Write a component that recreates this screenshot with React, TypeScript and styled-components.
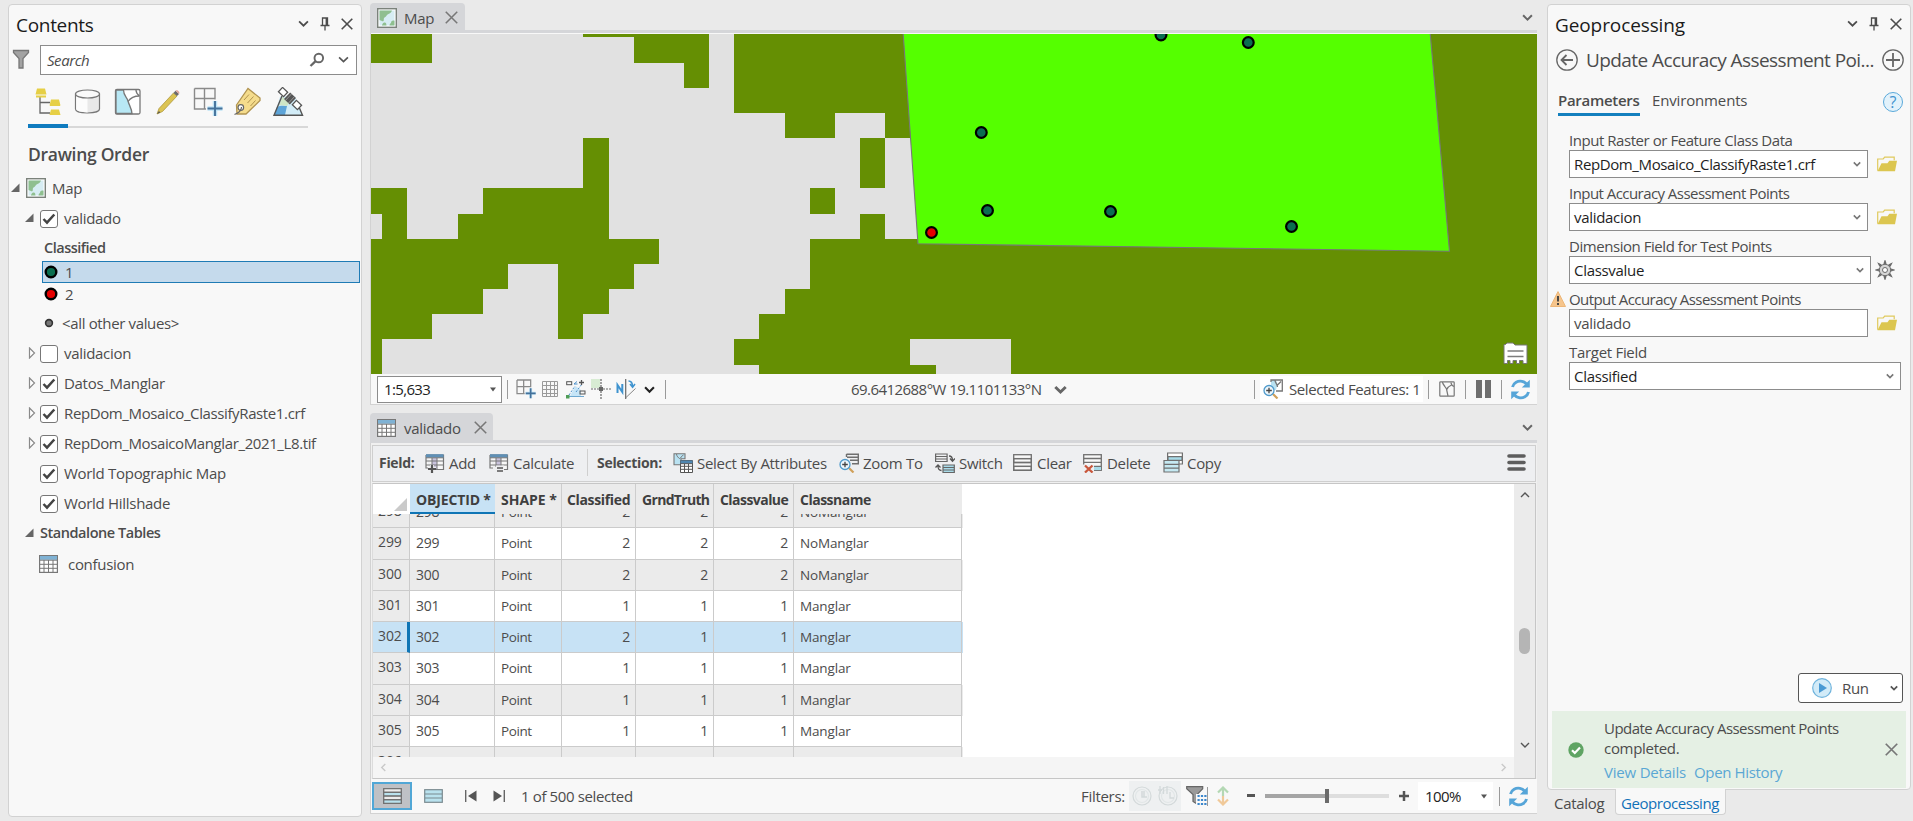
import React from 'react';
import styled, { createGlobalStyle, css } from 'styled-components';

const GlobalStyle = createGlobalStyle`
  * { box-sizing: border-box; }
  body {
    margin: 0;
    background: #eaeaea;
    color: #4c4c4c;
    font-family: "Open Sans", "Noto Sans", sans-serif;
    font-size: 15px;
    overflow: hidden;
  }
  svg { display: block; flex: none; }
`;

/* ---------- shared parts ---------- */

interface TextProps {
  $w?: number;
  $ls?: number;
  $size?: number;
  $weight?: number;
  $color?: string;
  $ml?: number;
}
const Text = styled.span<TextProps>`
  display: block;
  flex: none;
  white-space: nowrap;
  width: ${(p) => (p.$w ? `${p.$w}px` : 'auto')};
  letter-spacing: ${(p) => p.$ls ?? -0.3}px;
  font-size: ${(p) => p.$size ?? 15}px;
  font-weight: ${(p) => p.$weight ?? 400};
  color: ${(p) => p.$color ?? 'inherit'};
  margin-left: ${(p) => p.$ml ?? 0}px;
  line-height: 20px;
`;

const Slot = styled.span<{ $w: number; $ml?: number }>`
  display: flex;
  flex: none;
  align-items: center;
  justify-content: center;
  width: ${(p) => p.$w}px;
  margin-left: ${(p) => p.$ml ?? 0}px;
`;

const Separator = styled.span<{ $h?: number; $ml?: number; $color?: string }>`
  flex: none;
  width: 1px;
  height: ${(p) => p.$h ?? 19}px;
  margin-left: ${(p) => p.$ml ?? 0}px;
  background: ${(p) => p.$color ?? '#9a9a9a'};
`;

const Spacer = styled.span`
  flex: 1;
`;

/* ---------- icons ---------- */

const Chevron = ({ w = 10, color = '#555', sw = 1.8, dir = 0 }: { w?: number; color?: string; sw?: number; dir?: number }) => (
  <svg width={w} height={w} viewBox="0 0 10 10" fill="none" stroke={color} strokeWidth={sw}>
    <path d="M1 3l4 4 4-4" transform={`rotate(${dir} 5 5)`} />
  </svg>
);
const Caret = () => (
  <svg width="8" height="5" viewBox="0 0 8 5"><path d="M1 .5h6L4 4.5z" fill="#555" /></svg>
);
const Close = ({ s = 12, color = '#4c4c4c', sw = 1.6 }: { s?: number; color?: string; sw?: number }) => (
  <svg width={s} height={s} viewBox="0 0 12 12" stroke={color} strokeWidth={sw}><path d="M.7.7l10.6 10.6M11.300.7L.7 11.300" /></svg>
);
const Pin = () => (
  <svg width="10" height="14" viewBox="0 0 10 14" fill="none" stroke="#4c4c4c">
    <path d="M2.500 8V1h5v7" strokeWidth="1.300" /><path d="M6.500 1v7" strokeWidth="1.800" /><path d="M.5 8.500h9M5 8.500V13.500" strokeWidth="1.300" />
  </svg>
);
const Funnel = () => (
  <svg width="18" height="21" viewBox="0 0 18 21"><path d="M1.500 1.500h15v2l-5.500 6v9.500h-4V9.500l-5.500-6z" fill="#a3a3a3" stroke="#777" strokeWidth="1.300" /></svg>
);
const Magnifier = () => (
  <svg width="16" height="16" viewBox="0 0 16 16" fill="none" stroke="#666"><circle cx="9.800" cy="6" r="4.300" strokeWidth="1.900" /><path d="M6.600 9.200L1.500 14" strokeWidth="2.300" /></svg>
);
const MapIcon = ({ w = 20, h = 20 }) => (
  <svg width={w} height={h} viewBox="0 0 20 20" preserveAspectRatio="none">
    <rect x=".7" y=".7" width="18.600" height="18.600" fill="#fff" stroke="#7b827b" strokeWidth="1.400" />
    <rect x="2.500" y="2.500" width="15" height="15" fill="#d7edf3" />
    <path d="M2.500 2.500h12.500c-.6 2-2 2.800-3.600 3.500-2 1-1.900 2.500-3.900 3.500-1.200 1-.3 2.500-1 3.500-1 .8-1.800-.2-4-1zM5 17.500c.2-2 1.500-3.500 3-3s1.300 2 1.500 3zM12.500 17.500c0-2 1.800-2 1.800-4 .8-1 2-1 3.200-.8v4.800z" fill="#8fbf8f" />
  </svg>
);
const Table = () => (
  <svg width="19" height="18" viewBox="0 0 19 18">
    <rect x=".6" y=".6" width="17.800" height="16.800" fill="#fff" stroke="#777" strokeWidth="1.200" />
    <rect x="1" y="1" width="17" height="3.800" fill="#7fb2d4" />
    <path d="M1 5.200h17M1 9.300h17M1 13.300h17M5 5v12M9.500 5v12M14 5v12" stroke="#777" fill="none" />
  </svg>
);
const LayerTree = () => (
  <svg width="30" height="30" viewBox="0 0 30 30">
    <path d="M7 10v16h10M7 15.500h10" fill="none" stroke="#666" strokeWidth="1.300" />
    <g fill="#e6cf45"><path d="M4 1.500h8l1.500 6H2.500zM3 8.500h10v2H3zM18 12.500h8l1.500 6H16.500zM18 22.500h8l1.500 5.500H16.500zM17 18h10v1H17z" /></g>
  </svg>
);
const Cylinder = () => (
  <svg width="28" height="28" viewBox="0 0 28 28" stroke="#777" strokeWidth="1.200">
    <path d="M1.500 6v15c0 2.500 5.500 4 12 4s12-1.500 12-4V6z" fill="#e9e9e9" /><path d="M2.200 7v14c0 2 5 3.300 11.300 3.400V10z" fill="#fcfcfc" stroke="none" />
    <ellipse cx="13.500" cy="6" rx="12" ry="4" fill="#fafafa" />
  </svg>
);
const Selection = () => (
  <svg width="28" height="28" viewBox="0 0 28 28" fill="none" stroke="#777" strokeWidth="1.300">
    <rect x="1.500" y="1.500" width="24.500" height="24.500" rx="1.500" fill="#fff" />
    <path d="M2 2h7.500c0 6 3.500 7 4.500 11s3.500 7 4 12.500H2z" fill="#b8e8f5" />
    <path d="M14 13.500c2-3 5-5.500 11.500-5.500M22 2c0 3 1 4 3.500 6" />
  </svg>
);
const Pencil = () => (
  <svg width="28" height="28" viewBox="0 0 28 28">
    <path d="M5 20.500L19.500 5l3.500 3L8.500 23.500 3 26z" fill="#dcc453" stroke="#a89034" strokeWidth=".7" />
    <path d="M19.500 5l2-2.300 3.500 3.200L23 8z" fill="#6b6b6b" /><path d="M21.500 2.700c1.500-1.400 5 1.500 3.500 3.200z" fill="#e0a39a" /><path d="M3 26l2-3 1.200 1.600z" fill="#555" />
  </svg>
);
const GridPlus = ({ s = 30 }) => (
  <svg width={s} height={s} viewBox="0 0 30 30" fill="none">
    <path d="M1.500 1.500h20.500v11M1.500 1.500v20.500h11.500M11.500 1.500v20.500M1.500 11.500h20.500" stroke="#8a8a8a" strokeWidth={s < 25 ? 1.9 : 1.4} />
    <path d="M22 14v15M14.500 21.500h15" stroke="#bfe3f5" strokeWidth="4.500" /><path d="M22 14v15M14.500 21.500h15" stroke="#44719a" strokeWidth={s < 25 ? 2.4 : 1.9} />
  </svg>
);
const Tag = () => (
  <svg width="30" height="30" viewBox="0 0 30 30" fill="none">
    <path d="M3.500 18L15 1.500l12 9.500v2.500L13 27H4z" fill="#f5dc8c" stroke="#b19450" strokeWidth="1.300" />
    <path d="M11 13l5-5.500M14.500 16l6-6.500M17.500 19l5-5.500" stroke="#b19450" /><circle cx="7.800" cy="20.500" r="2.800" fill="#fff" stroke="#666" strokeWidth="1.200" />
    <path d="M8.500 20c0 4-3 6-7 7.500" stroke="#666" strokeWidth="1.200" />
  </svg>
);
const Satellite = () => (
  <svg width="32" height="30" viewBox="0 0 32 30">
    <path d="M8 9.500h15L30.500 28h-28z" fill="#d2ecf7" /><path d="M5 20c4-2 8-1 10-1l-2 9H2.500z" fill="#5da4d8" /><path d="M10.500 9.500L17 16l-2 3c-3 0-5-1-8-.5z" fill="#cfe6c6" />
    <path d="M10 9L2 28.300h28.500L27 20" fill="none" stroke="#555" strokeWidth="1.400" />
    <g transform="translate(18 11.500) rotate(43)"><rect x="-4" y="-4.500" width="8" height="9" fill="#555" /><path d="M-2 -4.500v9M2-4.500v9" stroke="#bbb" strokeWidth=".6" /><rect x="-13" y="-3" width="7" height="6" fill="#fff" stroke="#555" strokeWidth="1.300" /><rect x="6" y="-3" width="7" height="6" fill="#fff" stroke="#555" strokeWidth="1.300" /></g>
  </svg>
);
const GridIcon = () => (
  <svg width="18" height="18" viewBox="0 0 18 18" fill="none" stroke="#9a9a9a"><path d="M1.500 1.500h15v15h-15zM5.500 1.500v15M9.500 1.500v15M13.500 1.500v15M1.500 5.500h15M1.500 9.500h15M1.500 13.500h15" /></svg>
);
const Snapping = () => (
  <svg width="20" height="20" viewBox="0 0 20 20" fill="none">
    <path d="M9.500 7L15 11v6H4z" fill="#c6e5f7" /><path d="M3 16L9 7M10 13l6-8" stroke="#4b8fc9" strokeDasharray="2 1.500" /><path d="M8 5l3-2.500M8 5h3.500" stroke="#4b8fc9" />
    <rect x=".7" y="2.700" width="5" height="3" stroke="#555" /><rect x="14" y="12" width="5" height="3" stroke="#555" />
    <path d="M3 17.500h15" stroke="#6ea8d0" /><rect y="16" width="3.500" height="3.500" fill="#4f9d57" /><path d="M15.500 1v5M13 3.500h5" stroke="#555" strokeWidth="1.300" />
  </svg>
);
const Crosshair = () => (
  <svg width="20" height="20" viewBox="0 0 20 20"><rect width="9" height="9" fill="#d8ecd3" /><path d="M10 0v20M0 10h20" stroke="#666" strokeWidth="1.200" strokeDasharray="2 1" /><rect x="8" y="8" width="4" height="4" fill="#666" /></svg>
);
const North = () => (
  <svg width="21" height="20" viewBox="0 0 21 20" fill="none">
    <path d="M1.500 14V6l4.800 7V5" stroke="#3f93cf" strokeWidth="2" /><path d="M9.700 0v20" stroke="#666" strokeWidth="1.200" /><path d="M10 18.500L19.500 9.500" stroke="#888" />
    <path d="M12.500 2c3 0 4 2 4 5.500M14 5l2.600 3.300L19 5" stroke="#3f93cf" strokeWidth="1.500" />
  </svg>
);
const ZoomSel = ({ rows = false }) => (
  <svg width="20" height="20" viewBox="0 0 20 20" fill="none">
    {rows
      ? <path d="M7.500 1.200h11.800v9.500H13M7.500 1v3M8 4.200h11M11 7.300h8" stroke="#6f6f6f" strokeWidth="1.400" fill="none" />
      : <><path d="M8 1h5l1.500 4-1.500 6H8z" fill="#b9e2f2" /><path d="M8 3V1h11.300v11H13M12 1c0 3 2 3 2.500 7M14.500 6l3.500-3.500" stroke="#777" strokeWidth="1.300" /></>}
    <path d="M10 15l4.500 4.500" stroke="#d0a05a" strokeWidth="2.200" />
    <circle cx="6" cy="11.500" r="5" fill="#eef7fc" stroke="#4f9acb" strokeWidth="1.300" /><path d="M6 8.700v5.600M3.200 11.500h5.600" stroke="#444" strokeWidth="1.300" />
  </svg>
);
const SelMap = () => (
  <svg width="16" height="16" viewBox="0 0 16 16" fill="none" stroke="#777" strokeWidth="1.200"><rect x=".8" y=".8" width="14.400" height="14.400" rx=".8" /><path d="M3.500 1c0 3.500 3 4 4 7l1.500 7M7.800 8.500c1-2.500 2.500-3.500 4.700-4.500M12 1.500c0 2 1 3 3 4M4 2.500l2 3" /></svg>
);
const Pause = () => <svg width="15" height="18" viewBox="0 0 15 18" fill="#6e6e6e"><path d="M0 0h6v18H0zM9 0h6v18H9z" /></svg>;
const Refresh = () => (
  <svg width="21" height="21" viewBox="0 0 21 21" fill="none" stroke="#56a5d8" strokeWidth="2.900">
    <path d="M2.500 8C3.500 3.500 8 1.500 12 2.300c2 .4 3.500 1.500 4.500 2.700M18.500 13c-1 4.500-5.500 6.500-9.500 5.700-2-.4-3.500-1.500-4.500-2.700" />
    <path d="M19.800.8v7.700h-8zM1.200 20.200v-7.700h8z" fill="#56a5d8" stroke="none" />
  </svg>
);
const FieldIcon = ({ calc = false }) => (
  <svg width="20" height="20" viewBox="0 0 20 20" fill="none">
    <path d="M1 2h17.500v14.500H9M1 2v13h3" stroke="#777" strokeWidth="1.200" fill="#f8f8f8" /><rect x="1" y="1.200" width="17.500" height="3.500" fill="#5f8fb5" />
    <rect x="7" y="5" width="5" height="11" fill="#c9c3dd" /><path d="M1 8h17M1 12h17M7 5v9M12 5v11M1 4.800h17" stroke="#777" />
    {calc
      ? <g><rect x="7" y="12.500" width="8" height="7" fill="#eeeff1" /><path d="M8 15h6M8 18h6" stroke="#555" strokeWidth="1.700" /></g>
      : <g><path d="M7 12v8M3 16h8" stroke="#eeeff1" strokeWidth="4" /><path d="M7 12v8M3 16h8" stroke="#555" strokeWidth="2.200" /></g>}
  </svg>
);
const SelAttr = () => (
  <svg width="20" height="20" viewBox="0 0 20 20" fill="none">
    <path d="M1 .8h11v5H8v6H1z" fill="#b9e2f2" stroke="#777" strokeWidth="1.100" /><path d="M3.500 1c0 2 2 4 3 4.500S9 2 10.500 2" stroke="#777" />
    <path d="M7.500 7.500h12v12h-12z" fill="#fff" stroke="#555" /><path d="M7.500 7.500h12v3.200h-12z" fill="#4f86b0" /><path d="M7.500 13.300h12M7.500 16.300h12M11.500 11v8.500M15.500 11v8.500M7.500 10.700h12" stroke="#555" />
  </svg>
);
const SwitchIcon = () => (
  <svg width="20" height="20" viewBox="0 0 20 20" fill="none">
    <path d="M.6 1h11.500v7.500H.6zM.6 3.500h11.500M.6 6h11.500" stroke="#666" strokeWidth="1.200" /><path d="M8 12h11.300v7.500H8z" fill="#a8dbe9" /><path d="M8 12h11.300v7.500H8zM8 14.500h11.300M8 17h11.300" stroke="#666" strokeWidth="1.200" />
    <path d="M14 3c2.500 0 3.500 1.500 3.500 4.500M15 5.500l2.500 2.700L20 5.500M6.500 17.500c-2.500 0-3.500-1.500-3.500-4.500M.5 14.500L3 12l2.500 2.500" stroke="#555" strokeWidth="1.300" />
  </svg>
);
const Rows = ({ fill = 'none', a = 'none', b = 'none', w = 19, h = 17 }) => (
  <svg width={w} height={h} viewBox="0 0 19 17" preserveAspectRatio="none" stroke="#707070" strokeWidth="1.300">
    <rect x=".7" y=".7" width="17.600" height="15.600" fill={fill} />
    <rect x=".7" y="4.600" width="17.600" height="3.900" fill={a} /><rect x=".7" y="12.400" width="17.600" height="3.900" fill={b} />
    <path d="M1 4.600h17M1 8.500h17M1 12.400h17" />
  </svg>
);
const SelectedRows = () => (
  <svg width="19" height="14" viewBox="0 0 19 14" stroke="#7a8a90" strokeWidth="1.200">
    <rect x=".7" y=".7" width="17.600" height="12.600" fill="#b9e2ee" /><path d="M1 5h17M1 9h17" />
  </svg>
);
const DeleteRows = () => (
  <svg width="19" height="20" viewBox="0 0 19 20" fill="none">
    <rect x=".7" y="1.700" width="17.600" height="15.600" fill="#f8f8f8" stroke="#707070" strokeWidth="1.300" /><path d="M1 13h17v4H1z" fill="#a8dbe9" />
    <path d="M1 5.500h17M1 9.300h17M10 13.300h8" stroke="#707070" strokeWidth="1.300" /><rect x="0" y="11.500" width="11" height="8.500" fill="#eeeff1" /><path d="M2 12.500l7.500 7M9.500 12.500l-7.500 7" stroke="#c9573c" strokeWidth="2.300" />
  </svg>
);
const CopyRows = () => (
  <svg width="20" height="21" viewBox="0 0 20 21" stroke="#707070" strokeWidth="1.200">
    <path d="M4.600 1h14.800v11H4.600z" fill="#fff" /><path d="M5 4.700h14v3.700H5z" fill="#a8dbe9" /><path d="M1 8.500h15v11.500H1z" fill="#c5e9f2" /><path d="M1 12.300h15M1 16.100h15" />
  </svg>
);
const FolderIcon = () => (
  <svg width="20" height="16" viewBox="0 0 20 16"><path d="M.7 14.800V3h5.500l1.500-1.800h9.500v3" fill="none" stroke="#dfc95c" strokeWidth="1.200" /><path d="M.5 15.300l4-8h6l1.800-2.500H20l-2 10.500z" fill="#dcc650" /></svg>
);
const Gear = () => (
  <svg width="20" height="20" viewBox="-10 -10 20 20" fill="none" stroke="#6b6b6b">
    {[0, 45, 90, 135, 180, 225, 270, 315].map((a) => <path key={a} d="M-1 -6L0 -9L1 -6" transform={`rotate(${a})`} strokeWidth="1.300" fill="#6b6b6b" />)}
    <circle r="5.700" fill="#d6d6d6" strokeWidth="1" /><circle r="2.500" fill="#fff" strokeWidth="1" />
  </svg>
);
const Warning = () => (
  <svg width="16" height="16" viewBox="0 0 16 16"><path d="M8 .6L15.500 15.500H.5z" fill="#f6c58c" stroke="#edb678" /><path d="M8 5v5.500M8 12v2" stroke="#444" strokeWidth="1.900" /></svg>
);
const BackCircle = () => (
  <svg width="22" height="22" viewBox="0 0 22 22" fill="none" stroke="#666"><circle cx="11" cy="11" r="10.200" strokeWidth="1.300" /><path d="M17 11H5.500M10.500 6L5.500 11l5 5" strokeWidth="1.800" /></svg>
);
const PlusCircle = () => (
  <svg width="22" height="22" viewBox="0 0 22 22" fill="none" stroke="#666"><circle cx="11" cy="11" r="10.200" strokeWidth="1.300" /><path d="M11 4v14M4 11h14" strokeWidth="1.800" /></svg>
);
const PlayCircle = () => (
  <svg width="20" height="20" viewBox="0 0 20 20"><circle cx="10" cy="10" r="9.300" fill="#d2ebf8" stroke="#6fb3dc" strokeWidth="1.200" /><path d="M7 5l8 5-8 5z" fill="#4a9ad4" /></svg>
);
const CheckCircle = () => (
  <svg width="16" height="16" viewBox="0 0 16 16"><circle cx="8" cy="8" r="7.700" fill="#5fa463" /><path d="M4 8.200l2.800 2.800L12 5.500" stroke="#fff" strokeWidth="2.200" fill="none" /></svg>
);
const Clock = ({ bars = false }) => (
  <svg width="20" height="20" viewBox="0 0 20 20" fill="none" stroke="#d3d9da" strokeWidth="1.200">
    <circle cx="10" cy="10" r="9" /><circle cx="10" cy="10" r="6.500" stroke="#e1e6e7" />{bars ? <path d="M2 0v8M5.500 1v7M9 0v8M0 4h4M12 6v6h4" strokeWidth="1.300" /> : <path d="M10 5v6h5M12 5v6" strokeWidth="1.500" />}
  </svg>
);
const FunnelSel = () => (
  <svg width="21" height="20" viewBox="0 0 21 20"><path d="M.7.7h16v2l-5.700 6V18l-4-2.500V8.500L.7 2.700z" fill="#9a9a9a" stroke="#666" strokeWidth="1.200" /><path d="M10 8h11v12H10z" fill="#f8f8f8" /><path d="M11.500 10h9M11.500 14h9M11.500 18h9" stroke="#3b86cb" strokeWidth="2.200" strokeDasharray="2.200 1.200" /></svg>
);
const UpDown = () => (
  <svg width="12" height="20" viewBox="0 0 12 20" fill="none" strokeWidth="2.200"><path d="M6 10V2M1 6.500l5-5 5 5" stroke="#b4d8b4" /><path d="M6 10v8M1 13.500l5 5 5-5" stroke="#f0c999" /></svg>
);

/* ---------- page frame ---------- */

const Page = styled.div`
  display: grid;
  grid-template-columns: 354px 1167px 364px;
  column-gap: 8px;
  width: 1913px;
  height: 821px;
  padding: 4px 0 0 8px;
  overflow: hidden;
`;

const Panel = styled.section<{ $h: number }>`
  display: flex;
  flex-direction: column;
  height: ${(p) => p.$h}px;
  background: #f8f8f8;
  border: 1px solid #d2d2d2;
  border-radius: 4px;
`;

const PanelTitle = styled.header`
  display: flex;
  align-items: center;
  height: 39px;
  padding: 0 8px 0 7px;
  color: #1b1b1b;
`;

const TitleIcons = styled.div`
  display: flex;
  align-items: center;
  gap: 11px;
  margin-bottom: 2px;
`;

const TitleButtons = () => (
  <TitleIcons>
    <Chevron w={11} color="#4c4c4c" sw={1.6} />
    <Pin />
    <Close />
  </TitleIcons>
);

/* ---------- contents panel ---------- */

const SearchRow = styled.div`
  display: flex;
  align-items: center;
  height: 31px;
  padding-left: 3px;
`;
const SearchBox = styled.div`
  display: flex;
  align-items: center;
  width: 317px;
  height: 30px;
  margin-left: 10px;
  padding: 0 7px 0 6px;
  gap: 13px;
  background: #fff;
  border: 1px solid #8c8c8c;
  font-style: italic;
`;
const ListTabs = styled.div`
  display: flex;
  width: 280px;
  height: 42px;
  margin: 11px 0 0 19px;
  border-bottom: 2px solid #d8d8d8;
`;
const ListTab = styled.div<{ $active?: boolean }>`
  display: flex;
  align-items: center;
  justify-content: center;
  width: 40px;
  height: 42px;
  padding-bottom: 10px;
  ${(p) => p.$active && css`border-bottom: 4px solid #0f7bbf; padding-bottom: 6px;`}
`;
const Heading = styled.h2`
  margin: 13px 0 6px 19px;
  font-size: 17.500px;
  font-weight: 600;
  line-height: 27px;
  letter-spacing: -0.3px;
  color: #4c4c4c;
`;
const TreeRow = styled.div<{ $indent: number; $h?: number; $pt?: number }>`
  display: flex;
  align-items: center;
  height: ${(p) => p.$h ?? 30}px;
  padding-left: ${(p) => p.$indent}px;
  padding-top: ${(p) => p.$pt ?? 0}px;
`;
const SelectedRow = styled(TreeRow)`
  margin: 0 1px 0 33px;
  background: #c5daec;
  border: 1px solid #1f7bb5;
`;
const CheckFrame = styled.span`
  display: flex;
  align-items: center;
  justify-content: center;
  width: 18px;
  height: 18px;
  margin-top: 2px;
  background: #fff;
  border: 1px solid #777;
  border-radius: 3px;
`;
const Checkbox = ({ on = true }) => (
  <CheckFrame>{on && <svg width="14" height="12" viewBox="0 0 14 12"><path d="M1.500 6l3.500 3.700L12.300 1.500" fill="none" stroke="#444" strokeWidth="2.500" /></svg>}</CheckFrame>
);
const Expander = ({ open = false }) => (
  <svg width="9" height="12" viewBox="0 0 9 12">
    {open ? <path d="M8.500 1.500v8.500H0z" fill="#666" /> : <path d="M2.500 1l5 5-5 5z" fill="#fff" stroke="#8a8a8a" strokeWidth="1.200" />}
  </svg>
);
const Symbol = ({ fill, r = 5.3, sw = 2.4 }: { fill: string; r?: number; sw?: number }) => (
  <svg width="14" height="14" viewBox="-7 -7 14 14"><circle r={r} fill={fill} stroke={r < 5 ? '#333' : '#000'} strokeWidth={sw} /></svg>
);

const layers: { name: string; on: boolean; exp: boolean; ls?: number }[] = [
  { name: 'validacion', on: false, exp: true },
  { name: 'Datos_Manglar', on: true, exp: true },
  { name: 'RepDom_Mosaico_ClassifyRaste1.crf', on: true, exp: true, ls: -0.38 },
  { name: 'RepDom_MosaicoManglar_2021_L8.tif', on: true, exp: true, ls: -0.39 },
  { name: 'World Topographic Map', on: true, exp: false },
  { name: 'World Hillshade', on: true, exp: false },
];

const Contents = () => (
  <Panel $h={813}>
    <PanelTitle>
      <Text $size={19}>Contents</Text>
      <Spacer />
      <TitleButtons />
    </PanelTitle>
    <SearchRow>
      <Funnel />
      <SearchBox>
        <Text $ls={-0.45}>Search</Text>
        <Spacer />
        <Magnifier />
        <Chevron w={11} sw={1.5} />
      </SearchBox>
    </SearchRow>
    <ListTabs>
      <ListTab $active><LayerTree /></ListTab>
      <ListTab><Cylinder /></ListTab>
      <ListTab><Selection /></ListTab>
      <ListTab><Pencil /></ListTab>
      <ListTab><GridPlus /></ListTab>
      <ListTab><Tag /></ListTab>
      <ListTab><Satellite /></ListTab>
    </ListTabs>
    <Heading>Drawing Order</Heading>
    <TreeRow $indent={2} $h={28}>
      <Expander open />
      <Slot $w={20} $ml={6}><MapIcon /></Slot>
      <Text $ml={6}>Map</Text>
    </TreeRow>
    <TreeRow $indent={16} $h={32}>
      <Expander open />
      <Slot $w={18} $ml={6}><Checkbox /></Slot>
      <Text $ml={6}>validado</Text>
    </TreeRow>
    <TreeRow $indent={35} $h={27}><Text $size={14.5} $weight={600} $ls={-0.5}>Classified</Text></TreeRow>
    <SelectedRow $indent={1} $h={22}><Symbol fill="#0a6e50" /><Text $ml={7}>1</Text></SelectedRow>
    <TreeRow $indent={35} $h={22}><Symbol fill="#e60000" /><Text $ml={7}>2</Text></TreeRow>
    <TreeRow $indent={33} $h={33} $pt={3}><Symbol fill="#777" r={3.4} sw={1.6} /><Text $ml={6} $ls={-0.35}>{'<all other values>'}</Text></TreeRow>
    {layers.map((l) => (
      <TreeRow $indent={18} key={l.name}>
        <Slot $w={9}>{l.exp && <Expander />}</Slot>
        <Slot $w={18} $ml={4}><Checkbox on={l.on} /></Slot>
        <Text $ml={6} $ls={l.ls}>{l.name}</Text>
      </TreeRow>
    ))}
    <TreeRow $indent={16}><Expander open /><Text $size={14.5} $weight={600} $ml={6} $ls={-0.45}>Standalone Tables</Text></TreeRow>
    <TreeRow $indent={30} $h={32}><Table /><Text $ml={10}>confusion</Text></TreeRow>
  </Panel>
);

/* ---------- centre column ---------- */

const Center = styled.main`
  display: flex;
  flex-direction: column;
`;
const TabStrip = styled.div<{ $h: number }>`
  display: flex;
  align-items: flex-end;
  height: ${(p) => p.$h}px;
  padding-right: 4px;
  border-bottom: 3px solid #d5d6d9;
`;
const DocTab = styled.div<{ $w: number }>`
  display: flex;
  align-items: center;
  width: ${(p) => p.$w}px;
  height: 27px;
  padding: 2px 0 0 7px;
  background: #d5d6d9;
  border-radius: 4px 4px 0 0;
`;
const StripMenu = styled.span`
  padding-bottom: 7px;
`;
const MapFrame = styled.div`
  height: 372px;
  border: solid #d2d2d2;
  border-width: 0 0 1px 1px;
  background: #f8f8f8;
`;
const MapCanvas = styled.div`
  position: relative;
  height: 341px;
  padding-top: 1px;
`;
const LegendButton = styled.div`
  position: absolute;
  right: 9px;
  bottom: 9px;
`;
const StatusBar = styled.div`
  display: flex;
  align-items: center;
  height: 30px;
  padding-left: 6px;
`;
const Combo = styled.div<{ $w: number; $h: number; $plain?: boolean; $ml?: number }>`
  display: flex;
  flex: none;
  align-items: center;
  justify-content: space-between;
  width: ${(p) => p.$w}px;
  height: ${(p) => p.$h}px;
  margin-left: ${(p) => p.$ml ?? 0}px;
  padding: 0 4px 0 6px;
  color: #222;
  background: #fff;
  border: 1px solid ${(p) => (p.$plain ? '#fff' : '#8c8c8c')};
`;
const SelectedCount = styled.div`
  display: flex;
  align-items: center;
  width: 163px;
  height: 26px;
  margin-left: 5px;
  padding-left: 3px;
  background: #fff;
`;

const dots = [[1161, 35], [1248.300, 42.500], [981.300, 132.500], [987.500, 210.500], [1110.500, 211.500], [1291.500, 226.500]];

const MapView = () => (
  <MapCanvas>
    <svg width="1166" height="340" viewBox="371 34 1166 340">
      <rect x="371" y="34" width="1166" height="340" fill="#e1e1e1" />
      <g fill="#658f03">
        <path d="M371 34H432V63H371zM583 34H709V88H684V63H634V37H583z" />
        <path d="M371 188H407V239H458V214H483V188H583V138H609V239H659V264H634V289H609V314H583V339H558V264H508V289H483V314H432V339H382V374H371V239H382V214H371z" />
        <path d="M734 34H1537V374H1011V339H910V365H936V374H759V365H734V339H759V314H785V289H810V239H930V138H885V113H835V138H785V113H734z" />
        <path d="M860 138H885V188H860zM810 188H835V214H810zM860 214H885V239H860z" />
      </g>
      <path d="M902.200 20L918 243.700L1449.500 251.300L1429 20z" fill="#55ff00" stroke="#777" strokeWidth="1.100" />
      {dots.map(([x, y]) => <circle key={x} cx={x} cy={y} r="5.400" fill="#0a6e50" stroke="#000" strokeWidth="2.200" />)}
      <circle cx="931.500" cy="232.500" r="5.400" fill="#e60000" stroke="#000" strokeWidth="2.200" />
    </svg>
    <LegendButton>
      <svg width="25" height="23" viewBox="0 0 25 23">
        <path d="M1 21.500V2.500h1.500L4 1h6l2 2h12v18.500h-4v-3h-3.500v3h-3v-3H10v3H7v-3H4.500v3z" fill="#fff" stroke="#777" strokeWidth="1" />
        <path d="M4.500 9h16M4.500 14.500h16" stroke="#7d7d7d" strokeWidth="1.500" />
      </svg>
    </LegendButton>
  </MapCanvas>
);

const MapPane = () => (
  <>
    <TabStrip $h={29}>
      <DocTab $w={95}>
        <MapIcon />
        <Text $w={41} $ml={7}>Map</Text>
        <Close s={13} color="#777" sw={1.4} />
      </DocTab>
      <Spacer />
      <StripMenu><Chevron w={11} color="#666" /></StripMenu>
    </TabStrip>
    <MapFrame>
      <MapView />
      <StatusBar>
        <Combo $w={125} $h={27}><Text $ls={-0.65}>1:5,633</Text><Caret /></Combo>
        <Separator $ml={5} />
        <Slot $w={20} $ml={8}><GridPlus s={20} /></Slot>
        <Slot $w={18} $ml={5}><GridIcon /></Slot>
        <Slot $w={20} $ml={7}><Snapping /></Slot>
        <Slot $w={20} $ml={5}><Crosshair /></Slot>
        <Slot $w={21} $ml={5}><North /></Slot>
        <Slot $w={11} $ml={7}><Chevron w={11} color="#222" sw={1.9} /></Slot>
        <Separator $ml={10} />
        <Text $w={191} $ml={185} $ls={-0.55}>69.6412688°W 19.1101133°N</Text>
        <Slot $w={13} $ml={12}><Chevron w={13} color="#666" sw={2.2} /></Slot>
        <Separator $ml={187} />
        <SelectedCount><ZoomSel /><Text $ml={6} $ls={-0.43}>Selected Features: 1</Text></SelectedCount>
        <Separator $ml={5} />
        <Slot $w={16} $ml={10}><SelMap /></Slot>
        <Separator $ml={10} />
        <Slot $w={15} $ml={10}><Pause /></Slot>
        <Separator $ml={10} />
        <Slot $w={21} $ml={8}><Refresh /></Slot>
      </StatusBar>
    </MapFrame>
  </>
);

/* ---------- attribute table ---------- */

const TableFrame = styled.div`
  display: flex;
  flex-direction: column;
  height: 371px;
  padding: 2px 1px 0;
  background: #f0f0f0;
  border: solid #d2d2d2;
  border-width: 0 0 1px 1px;
`;
const TableToolbar = styled.div`
  display: flex;
  align-items: center;
  flex: none;
  height: 37px;
  padding: 0 0 2px 6px;
  background: #eeeff1;
  border: 1px solid #cfcfcf;
`;
const GridBox = styled.div`
  display: flex;
  flex: none;
  height: 296px;
  margin-top: 1px;
  background: #fff;
  border: 1px solid #c6c6c6;
  border-left-color: #dcdcdc;
`;
const GridMain = styled.div`
  display: flex;
  flex-direction: column;
  width: 1141px;
`;
const gridColumns = 'grid-template-columns: 37px 85px 67px 74px 78px 80px 168px;';
const HeaderRow = styled.div`
  display: grid;
  flex: none;
  ${gridColumns}
  width: 589px;
  height: 30px;
  background: #ebebeb;
`;
const HeaderCell = styled.div<{ $sorted?: boolean; $pad: number }>`
  display: flex;
  align-items: center;
  height: 30px;
  padding: 2px 0 0 ${(p) => p.$pad}px;
  border-right: 1px solid #cdcdcd;
  color: #3f3f3f;
  &:last-child { border-right: 0; }
  ${(p) => p.$sorted && css`background: #c7e2f5; border-bottom: 2px solid #0f75b5; border-right: 0; padding-top: 4px;`}
`;
const CornerCell = styled.div`
  display: flex;
  align-items: flex-end;
  justify-content: flex-end;
  padding: 0 3px 3px 0;
  background: #fff;
`;
const Body = styled.div`
  height: 243px;
  overflow: hidden;
`;
const BodyRows = styled.div`
  margin-top: -17px;
`;
const DataRow = styled.div<{ $alt: boolean; $sel: boolean }>`
  display: grid;
  ${gridColumns}
  width: 590px;
  height: 31.25px;
  background: ${(p) => (p.$sel ? '#c7e2f5' : p.$alt ? '#ebebeb' : '#fff')};
`;
const Cell = styled.div<{ $right?: boolean; $head?: boolean; $mark?: boolean }>`
  display: flex;
  align-items: center;
  justify-content: ${(p) => (p.$right ? 'flex-end' : 'flex-start')};
  padding: 0 ${(p) => (p.$right ? 5 : 0)}px 0 6px;
  border-right: 1px solid #cbcbcb;
  border-bottom: 1.500px solid #cbcbcb;
  ${(p) => p.$head && css`padding: 0 0 2px 5px; background: #ebebeb;`}
  ${(p) => p.$mark && css`background: #c7e2f5; border-right: 3px solid #0f75b5;`}
`;
const HScroll = styled.div`
  display: flex;
  align-items: center;
  justify-content: space-between;
  height: 21px;
  padding: 0 6px;
  background: #f5f5f5;
`;
const VScroll = styled.div`
  display: flex;
  flex-direction: column;
  align-items: center;
  width: 21px;
  padding-top: 6px;
  background: #ebebeb;
`;
const Thumb = styled.span<{ $top: number; $bottom: number }>`
  width: 11px;
  height: 26px;
  margin: ${(p) => p.$top}px 0 ${(p) => p.$bottom}px;
  border-radius: 5.500px;
  background: #b5b5b5;
`;
const TableStatus = styled.div`
  display: flex;
  align-items: center;
  flex: none;
  height: 34px;
  background: #f8f8f8;
  margin: 0 -1px;
  padding-left: 1px;
`;
const ViewButton = styled.div<{ $active?: boolean }>`
  display: flex;
  align-items: center;
  justify-content: center;
  width: 40px;
  height: 28px;
  ${(p) => p.$active && css`background: #bfc1c5; border: 2px solid #51a7d6;`}
`;
const DisabledGroup = styled.div`
  display: flex;
  align-items: center;
  justify-content: center;
  gap: 6px;
  width: 52px;
  height: 30px;
  margin-left: 6px;
  background: #eef0f1;
`;
const SliderTrack = styled.div`
  display: flex;
  align-items: center;
  width: 124px;
  height: 4px;
  margin-left: 10px;
  background: linear-gradient(90deg, #a5a5a5 50%, #dedede 50%);
  justify-content: center;
`;
const SliderThumb = styled.span`
  flex: none;
  width: 4px;
  height: 14px;
  background: #6b6b6b;
`;

const records = [
  [298, 2, 2, 2, 'NoManglar'],
  [299, 2, 2, 2, 'NoManglar'],
  [300, 2, 2, 2, 'NoManglar'],
  [301, 1, 1, 1, 'Manglar'],
  [302, 2, 1, 1, 'Manglar'],
  [303, 1, 1, 1, 'Manglar'],
  [304, 1, 1, 1, 'Manglar'],
  [305, 1, 1, 1, 'Manglar'],
  [306, 1, 1, 1, 'Manglar'],
] as const;

const headers: { name: string; ls: number; pad: number }[] = [
  { name: 'OBJECTID *', ls: -0.15, pad: 6 },
  { name: 'SHAPE *', ls: 0, pad: 6 },
  { name: 'Classified', ls: -0.35, pad: 5 },
  { name: 'GrndTruth', ls: -0.68, pad: 6 },
  { name: 'Classvalue', ls: -0.55, pad: 6 },
  { name: 'Classname', ls: -0.5, pad: 6 },
];

const TablePane = () => (
  <>
    <TabStrip $h={38}>
      <DocTab $w={123}>
        <Table />
        <Text $w={70} $ml={8}>validado</Text>
        <Close s={13} color="#777" sw={1.4} />
      </DocTab>
      <Spacer />
      <StripMenu><Chevron w={11} color="#666" /></StripMenu>
    </TabStrip>
    <TableFrame>
      <TableToolbar>
        <Text $weight={700} $w={46} $size={14}>Field:</Text>
        <FieldIcon /><Text $ml={4} $w={40}>Add</Text>
        <FieldIcon calc /><Text $ml={4} $w={74}>Calculate</Text>
        <Separator $h={27} $color="#cfcfcf" />
        <Text $weight={700} $ml={9} $w={76} $size={14}>Selection:</Text>
        <SelAttr /><Text $ml={4} $w={142}>Select By Attributes</Text>
        <ZoomSel rows /><Text $ml={4} $w={72}>Zoom To</Text>
        <SwitchIcon /><Text $ml={4} $w={54}>Switch</Text>
        <Rows fill="#f8f8f8" /><Text $ml={5} $w={46}>Clear</Text>
        <DeleteRows /><Text $ml={5} $w={56}>Delete</Text>
        <CopyRows /><Text $ml={4}>Copy</Text>
        <Spacer />
        <Slot $w={37}><svg width="19" height="17" viewBox="0 0 19 17" stroke="#5d5d5d" strokeWidth="3.600" strokeLinecap="round"><path d="M2 2h15M2 8.500h15M2 15h15" /></svg></Slot>
      </TableToolbar>
      <GridBox>
        <GridMain>
          <HeaderRow>
            <CornerCell><svg width="13" height="13" viewBox="0 0 13 13"><path d="M13 0v13H0z" fill="#cacaca" /></svg></CornerCell>
            {headers.map((h, i) => (
              <HeaderCell key={h.name} $sorted={i === 0} $pad={h.pad}><Text $weight={700} $size={14} $ls={h.ls}>{h.name}</Text></HeaderCell>
            ))}
          </HeaderRow>
          <Body>
            <BodyRows>
              {records.map(([id, a, b, c, name]) => (
                <DataRow key={id} $alt={id % 2 === 0} $sel={id === 302}>
                  <Cell $head $mark={id === 302}><Text $size={14} $ls={-0.1}>{id}</Text></Cell>
                  <Cell><Text $size={14}>{id}</Text></Cell>
                  <Cell><Text $size={13.500} $ls={-0.4}>Point</Text></Cell>
                  <Cell $right><Text $size={14}>{a}</Text></Cell>
                  <Cell $right><Text $size={14}>{b}</Text></Cell>
                  <Cell $right><Text $size={14}>{c}</Text></Cell>
                  <Cell><Text $size={13.500} $ls={-0.15}>{name}</Text></Cell>
                </DataRow>
              ))}
            </BodyRows>
          </Body>
          <HScroll>
            <Chevron w={9} dir={90} color="#c9c9c9" sw={1.500} />
            <Chevron w={9} dir={-90} color="#c9c9c9" sw={1.500} />
          </HScroll>
        </GridMain>
        <VScroll>
          <Chevron w={10} dir={180} color="#555" sw={1.400} />
          <Thumb $top={128} $bottom={86} />
          <Chevron w={10} color="#555" sw={1.400} />
        </VScroll>
      </GridBox>
      <TableStatus>
        <ViewButton $active><Rows fill="#ececec" a="#b9e2ee" b="#b9e2ee" w={19} h={16} /></ViewButton>
        <Slot $w={19} $ml={12}><SelectedRows /></Slot>
        <Slot $w={12} $ml={22}><svg width="12" height="12" viewBox="0 0 12 12"><path d="M.7 0v12" stroke="#666" strokeWidth="1.400" /><path d="M11.500.5v11L3 6z" fill="#555" /></svg></Slot>
        <Slot $w={12} $ml={16}><svg width="12" height="12" viewBox="0 0 12 12"><path d="M11.300 0v12" stroke="#666" strokeWidth="1.400" /><path d="M.5.5v11L9 6z" fill="#555" /></svg></Slot>
        <Text $ml={16} $w={560} $ls={-0.37}>1 of 500 selected</Text>
        <Text $w={42}>Filters:</Text>
        <DisabledGroup><Clock /><Clock bars /></DisabledGroup>
        <Slot $w={21} $ml={5}><FunnelSel /></Slot>
        <Separator $ml={0} />
        <Slot $w={12} $ml={9}><UpDown /></Slot>
        <Slot $w={8} $ml={18}><svg width="8" height="4"><rect width="8" height="3" fill="#555" /></svg></Slot>
        <SliderTrack><SliderThumb /></SliderTrack>
        <Slot $w={10} $ml={10}><svg width="10" height="10" viewBox="0 0 10 10" stroke="#555" strokeWidth="2.500"><path d="M5 0v10M0 5h10" /></svg></Slot>
        <Combo $w={75} $h={28} $plain $ml={9}><Text $ls={-0.6}>100%</Text><Caret /></Combo>
        <Separator $ml={6} />
        <Slot $w={21} $ml={8}><Refresh /></Slot>
      </TableStatus>
    </TableFrame>
  </>
);

/* ---------- geoprocessing panel ---------- */

const Side = styled.aside`
  display: flex;
  flex-direction: column;
  margin: 0 -2px 0 2px;
`;
const ToolHeader = styled.div`
  display: flex;
  align-items: center;
  height: 32px;
  padding-left: 8px;
`;
const ToolTabs = styled.div`
  display: flex;
  align-items: flex-start;
  height: 54px;
  padding: 14px 0 0 10px;
`;
const ToolTab = styled.div<{ $active?: boolean; $w: number }>`
  width: ${(p) => p.$w}px;
  height: 26px;
  margin-right: 12px;
  ${(p) => p.$active && css`border-bottom: 3px solid #1480be;`}
`;
const HelpIcon = styled.span`
  display: flex;
  align-items: center;
  justify-content: center;
  width: 20px;
  height: 20px;
  margin: 2px 7px 0 0;
  color: #3f93cf;
  font-size: 16px;
  line-height: 18px;
  background: #e2f2fb;
  border: 1px solid #5aa9da;
  border-radius: 50%;
`;
const Field = styled.div`
  height: 53px;
  padding-left: 21px;
`;
const FieldLabel = styled.div`
  display: flex;
  align-items: center;
  height: 20px;
  margin-left: -19px;
`;
const FieldRow = styled.div`
  display: flex;
  align-items: center;
`;
const FieldInput = styled.div<{ $w: number; $muted?: boolean }>`
  display: flex;
  align-items: center;
  justify-content: space-between;
  width: ${(p) => p.$w}px;
  height: 28px;
  padding: 0 6px 0 4px;
  color: ${(p) => (p.$muted ? '#4c4c4c' : '#1e1e1e')};
  background: #fff;
  border: 1px solid #8c8c8c;
`;
const RunRow = styled.div`
  display: flex;
  justify-content: flex-end;
  padding: 0 7px 8px 0;
`;
const RunButton = styled.div`
  display: flex;
  align-items: center;
  width: 105px;
  height: 30px;
  padding-left: 13px;
  background: #fff;
  border: 1px solid #555;
  border-radius: 3px;
`;
const Message = styled.div`
  display: flex;
  align-items: center;
  height: 77px;
  margin: 0 4px 1px;
  padding: 0 8px 0 16px;
  background: #e5f0e4;
`;
const MessageText = styled.div`
  display: flex;
  flex-direction: column;
  flex: 1;
  margin-left: 20px;
`;
const Links = styled.div`
  display: flex;
  gap: 8px;
  margin-top: 4px;
  color: #5aa7d4;
`;
const DockTabs = styled.div`
  display: flex;
  align-items: flex-start;
  padding-left: 7px;
`;
const DockTab = styled.div<{ $active?: boolean; $w: number }>`
  display: flex;
  align-items: center;
  width: ${(p) => p.$w}px;
  height: 26px;
  margin-top: -1px;
  padding-top: 2px;
  ${(p) => p.$active && css`
    padding-left: 5px; color: #1272b8; background: #f8f8f8;
    border: 1px solid #d2d2d2; border-top: 0; border-radius: 0 0 4px 4px;
  `}
`;

type Param = { label: string; value: string; w: number; icon?: 'folder' | 'gear'; muted?: boolean; warn?: boolean; lls?: number; vls?: number };
const params: Param[] = [
  { label: 'Input Raster or Feature Class Data', value: 'RepDom_Mosaico_ClassifyRaste1.crf', w: 299, icon: 'folder', lls: -0.45, vls: -0.38 },
  { label: 'Input Accuracy Assessment Points', value: 'validacion', w: 299, icon: 'folder', lls: -0.55 },
  { label: 'Dimension Field for Test Points', value: 'Classvalue', w: 302, icon: 'gear', lls: -0.45 },
  { label: 'Output Accuracy Assessment Points', value: 'validado', w: 299, icon: 'folder', muted: true, warn: true, lls: -0.57 },
  { label: 'Target Field', value: 'Classified', w: 332 },
];

const Geoprocessing = () => (
  <Side>
    <Panel $h={786}>
      <PanelTitle>
        <Text $size={19} $ls={-0.1}>Geoprocessing</Text>
        <Spacer />
        <TitleButtons />
      </PanelTitle>
      <ToolHeader>
        <BackCircle />
        <Text $size={19} $ml={8} $w={296} $ls={-0.58}>Update Accuracy Assessment Poi...</Text>
        <PlusCircle />
      </ToolHeader>
      <ToolTabs>
        <ToolTab $active $w={82}><Text $weight={600}>Parameters</Text></ToolTab>
        <ToolTab $w={110}><Text $ls={-0.15}>Environments</Text></ToolTab>
        <Spacer />
        <HelpIcon>?</HelpIcon>
      </ToolTabs>
      {params.map((p) => (
        <Field key={p.label}>
          <FieldLabel>
            <Slot $w={16}>{p.warn && <Warning />}</Slot>
            <Text $ml={3} $ls={p.lls}>{p.label}</Text>
          </FieldLabel>
          <FieldRow>
            <FieldInput $w={p.w} $muted={p.muted}>
              <Text $ls={p.vls}>{p.value}</Text>
              {!p.muted && <Chevron w={8} color="#777" sw={2} />}
            </FieldInput>
            {p.icon === 'folder' && <Slot $w={20} $ml={9}><FolderIcon /></Slot>}
            {p.icon === 'gear' && <Slot $w={20} $ml={4}><Gear /></Slot>}
          </FieldRow>
        </Field>
      ))}
      <Spacer />
      <RunRow>
        <RunButton>
          <PlayCircle />
          <Text $ml={10} $w={48}>Run</Text>
          <Chevron w={8} sw={2.200} />
        </RunButton>
      </RunRow>
      <Message>
        <CheckCircle />
        <MessageText>
          <Text $ls={-0.53}>Update Accuracy Assessment Points</Text>
          <Text>completed.</Text>
          <Links><Text $ls={-0.2}>View Details</Text><Text $ls={-0.35}>Open History</Text></Links>
        </MessageText>
        <Close s={13} color="#777" />
      </Message>
    </Panel>
    <DockTabs>
      <DockTab $w={61}><Text>Catalog</Text></DockTab>
      <DockTab $active $w={111}><Text $ls={-0.45}>Geoprocessing</Text></DockTab>
    </DockTabs>
  </Side>
);

export default function App() {
  return (
    <>
      <GlobalStyle />
      <Page>
        <Contents />
        <Center>
          <MapPane />
          <TablePane />
        </Center>
        <Geoprocessing />
      </Page>
    </>
  );
}
